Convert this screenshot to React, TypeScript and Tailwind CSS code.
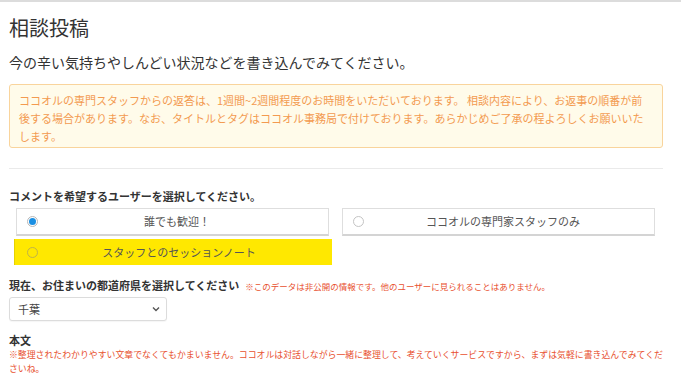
import React from "react";

const FONT = { fontFamily: '"Noto Sans CJK JP", "Noto Sans", sans-serif' };

function Radio({ checked, tone = "white" }: { checked?: boolean; tone?: "white" | "yellow" }) {
  if (checked) {
    return (
      <span className="flex h-[11px] w-[11px] items-center justify-center rounded-full border border-[#b8b8b8] bg-white">
        <span className="h-[7px] w-[7px] rounded-full bg-[#1a8fe3]" />
      </span>
    );
  }
  return (
    <span
      className={
        tone === "yellow"
          ? "h-[11px] w-[11px] rounded-full border border-[#bfb24a] bg-transparent"
          : "h-[11px] w-[11px] rounded-full border border-[#c4c4c4] bg-white"
      }
    />
  );
}

function Choice({ label, checked, className }: { label: string; checked?: boolean; className: string }) {
  return (
    <div className={"flex items-center " + className}>
      <div className="flex w-[21px] justify-end">
        <Radio checked={checked} />
      </div>
      <div className="flex-1 text-center text-[11px] text-[#555]">{label}</div>
      <div className="w-[12px]" />
    </div>
  );
}

export default function App() {
  return (
    <div className="min-h-screen border-t-2 border-[#dcdcdc] bg-white px-[9px] text-[#333]" style={FONT}>
      <h1 className="mt-[16px] text-[20px] leading-[20px] font-normal text-[#333]">相談投稿</h1>
      <p className="mt-[14px] text-[14px] leading-[20px] text-[#333]">
        今の辛い気持ちやしんどい状況などを書き込んでみてください。
      </p>

      <div className="mt-[12px] h-[64px] w-[654px] rounded-[3px] border border-[#f9d49c] bg-[#fffbea] px-[9px] pt-[6px] text-[11px] leading-[18px] whitespace-nowrap text-[#f39a50]">
        ココオルの専門スタッフからの返答は、1週間~2週間程度のお時間をいただいております。 相談内容により、お返事の順番が前
        <br />
        後する場合があります。なお、タイトルとタグはココオル事務局で付けております。あらかじめご了承の程よろしくお願いいた
        <br />
        します。
      </div>

      <hr className="mt-[20px] w-[654px] border-t border-[#eaeaea]" />

      <div className="mt-[19px] text-[11px] leading-[16px] font-semibold text-[#333]">
        コメントを希望するユーザーを選択してください。
      </div>

      <div className="mt-[4px] ml-[7px] flex gap-[13px]">
        <Choice
          checked
          label="誰でも歓迎！"
          className="h-[28px] w-[313px] border border-b-2 border-[#dedede] border-b-[#d4d4d4] bg-white"
        />
        <Choice
          label="ココオルの専門家スタッフのみ"
          className="h-[28px] w-[313px] border border-b-2 border-[#dedede] border-b-[#d4d4d4] bg-white"
        />
      </div>

      <div className="mt-[3px] ml-[5px] flex h-[26px] w-[318px] items-center border-l border-[#e6d200] bg-[#ffe800]">
        <div className="flex w-[23px] justify-end">
          <Radio tone="yellow" />
        </div>
        <div className="flex-1 text-center text-[11px] text-[#555]">スタッフとのセッションノート</div>
        <div className="w-[12px]" />
      </div>

      <div className="mt-[12px] flex items-baseline gap-[6px] leading-[16px]">
        <span className="text-[11px] font-semibold text-[#333]">現在、お住まいの都道府県を選択してください</span>
        <span className="text-[8.5px] text-[#e8512f]">※このデータは非公開の情報です。他のユーザーに見られることはありません。</span>
      </div>

      <div className="mt-[3px] flex h-[24px] w-[158px] items-center justify-between rounded-[3px] border border-[#dcdcdc] bg-white pr-[6px] pl-[8px] shadow-[0_1px_1px_rgba(0,0,0,0.04)]">
        <span className="text-[11px] text-[#444]">千葉</span>
        <svg width="8" height="6" viewBox="0 0 8 6" fill="none">
          <path d="M1 1.5 L4 4.5 L7 1.5" stroke="#555" strokeWidth="1.4" />
        </svg>
      </div>

      <div className="mt-[11px] text-[11px] leading-[16px] font-semibold text-[#333]">本文</div>
      <div className="text-[8.9px] leading-[14px] whitespace-nowrap text-[#e8512f]">
        ※整理されたわかりやすい文章でなくてもかまいません。ココオルは対話しながら一緒に整理して、考えていくサービスですから、まずは気軽に書き込んでみてくだ
        <br />
        さいね。
      </div>
    </div>
  );
}
